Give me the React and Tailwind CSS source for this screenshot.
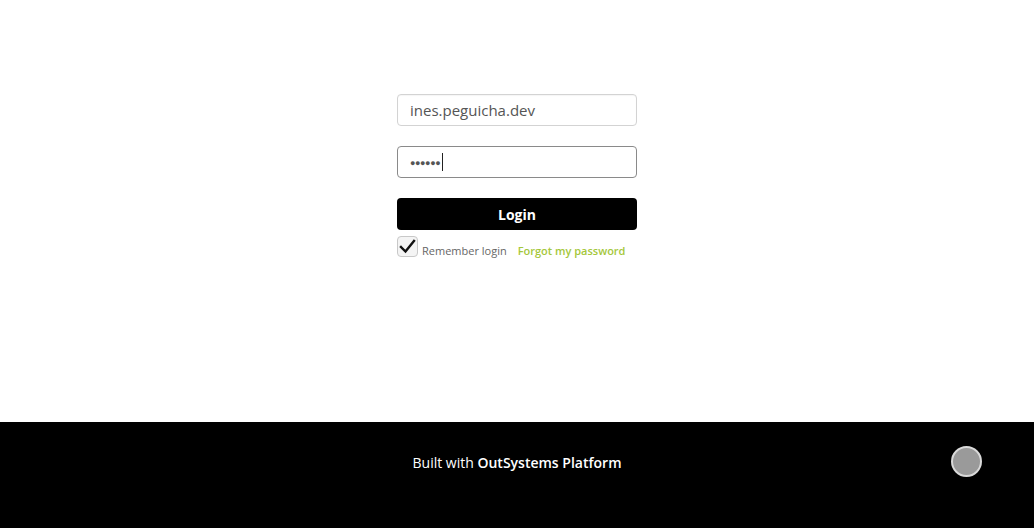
import { useState } from "react";

function LoginForm() {
  const [remember] = useState(true);

  return (
    <div className="w-[240px] flex flex-col">
      {/* Username */}
      <div className="h-[32px] rounded-[4px] border border-[#d3d3d3] bg-white flex items-center px-[12px] text-[15px] text-[#555] shadow-[inset_0_1px_1px_rgba(0,0,0,0.04)]">
        ines.peguicha.dev
      </div>

      {/* Password (focused) */}
      <div className="mt-[20px] h-[32px] rounded-[4px] border border-[#8a8a8a] bg-white flex items-center px-[12px] text-[#555]">
        <span className="text-[9px] tracking-[-0.4px] leading-none">●●●●●●</span>
        <span className="ml-[2px] w-px h-[18px] bg-[#222]" />
      </div>

      {/* Login button */}
      <button className="mt-[20px] h-[32px] rounded-[4px] bg-black text-white text-[14px] font-bold">
        Login
      </button>

      {/* Remember / forgot */}
      <div className="mt-[6px] flex items-end">
        <div className="w-[21px] h-[21px] rounded-[4px] border border-[#c8c8c8] bg-[#f4f4f4] flex items-center justify-center">
          {remember && (
            <svg width="17" height="15" viewBox="0 0 17 15">
              <path d="M2 8 L6.5 12.5 L15 2" fill="none" stroke="#111" strokeWidth="2.4" strokeLinecap="square" />
            </svg>
          )}
        </div>
        <span className="ml-[4px] text-[11px] text-[#666] leading-[14px] translate-y-[1px]">Remember login</span>
        <a href="#" className="ml-[11px] text-[11px] font-semibold text-[#a5c73b] leading-[14px] translate-y-[1px]">
          Forgot my password
        </a>
      </div>
    </div>
  );
}

export default function App() {
  return (
    <div className="h-[528px] flex flex-col bg-white font-['Open_Sans',sans-serif]">
      <main className="flex-1 flex justify-center pt-[94px]">
        <LoginForm />
      </main>

      {/* Footer */}
      <footer className="h-[106px] bg-black flex items-center justify-center relative pb-[26px]">
        <p className="text-white text-[14px]">
          Built with <span className="font-semibold">OutSystems Platform</span>
        </p>
        <div className="absolute left-[951px] top-[24px] w-[31px] h-[31px] rounded-full bg-[#9a9a9a] border-2 border-[#d9d9d9]" />
      </footer>
    </div>
  );
}
